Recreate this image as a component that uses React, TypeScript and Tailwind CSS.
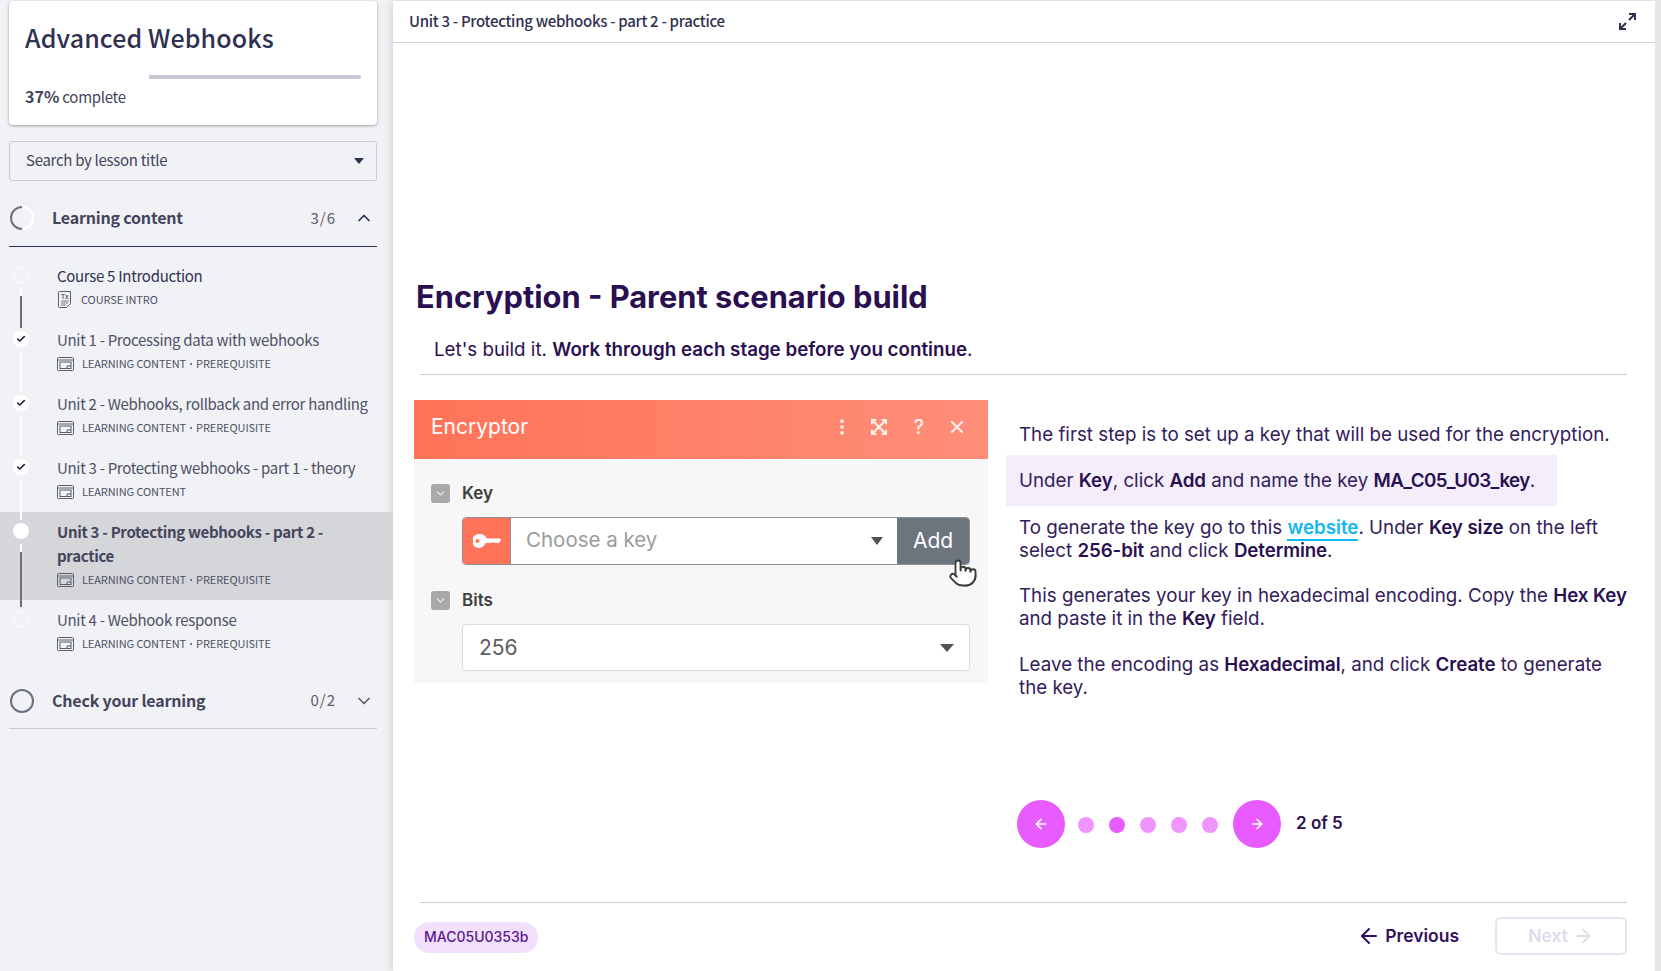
import { ArrowLeft, ArrowRight, Check, ChevronDown, ChevronUp, MoreVertical, Pointer, X } from "lucide-react";

const lessons = [
  { title: "Course 5 Introduction", meta: ["COURSE INTRO"], state: "todo", doc: true, line: "active" },
  { title: "Unit 1 - Processing data with webhooks", meta: ["LEARNING CONTENT", "PREREQUISITE"], state: "done", line: "plain" },
  { title: "Unit 2 - Webhooks, rollback and error handling", meta: ["LEARNING CONTENT", "PREREQUISITE"], state: "done", line: "plain" },
  { title: "Unit 3 - Protecting webhooks - part 1 - theory", meta: ["LEARNING CONTENT"], state: "done", line: "plain" },
  { title: "Unit 3 - Protecting webhooks - part 2 -\npractice", meta: ["LEARNING CONTENT", "PREREQUISITE"], state: "current", line: "current" },
  { title: "Unit 4 - Webhook response", meta: ["LEARNING CONTENT", "PREREQUISITE"], state: "todo", line: "none" },
];

function LessonIcon() {
  return (
    <svg width="17" height="14" viewBox="0 0 17 14" fill="none" stroke="#5b5c70" strokeWidth="1" className="shrink-0">
      <rect x="0.5" y="0.5" width="16" height="13" rx="1" />
      <path d="M0.5 3h16" />
      <rect x="3" y="5" width="11" height="6.5" />
      <path d="M10 11.5V9h4" />
    </svg>
  );
}

function DocIcon() {
  return (
    <svg width="14" height="17" viewBox="0 0 14 17" fill="none" stroke="#5b5c70" strokeWidth="1" className="ml-[1px] mr-[1px] shrink-0">
      <path d="M1.5 0.5h11v12l-4 4h-7a1 1 0 0 1-1-1v-14a1 1 0 0 1 1-1z" />
      <path d="M3 10h8M3 12h7M3 14h5" strokeWidth="0.8" />
      <text x="3" y="7.5" fontSize="6.5" fontWeight="700" fill="#5b5c70" stroke="none" fontFamily="Liberation Sans, sans-serif">Tx</text>
    </svg>
  );
}

function LessonRow({ lesson }: { lesson: (typeof lessons)[number] }) {
  const current = lesson.state === "current";
  return (
    <div className={`relative flex ${current ? "h-[88px] bg-[#d5d6da]" : "h-16"}`}>
      {lesson.line === "plain" && <div className="absolute left-[20px] top-[32px] z-10 h-[40px] w-[2px] bg-white" />}
      {lesson.line === "active" && (
        <div className="absolute left-[20px] top-[32px] z-10 h-[40px] w-[2px] bg-white">
          <div className="mt-[8px] h-[32px] w-[2px] bg-[#6d6e82]" />
        </div>
      )}
      {lesson.line === "current" && (
        <div className="absolute left-[20px] top-[32px] z-10 h-[63px] w-[2px] bg-white">
          <div className="mt-[8px] h-[55px] w-[2px] bg-[#6d6e82]" />
        </div>
      )}
      <div className="ml-[13px] mt-[11px] h-4 w-4 shrink-0">
        {lesson.state === "todo" ? (
          <div className="h-4 w-4 rounded-full border border-white" />
        ) : (
          <div className="flex h-4 w-4 items-center justify-center rounded-full bg-white">
            {lesson.state === "done" && <Check size={10} strokeWidth={3.5} className="text-[#14142b]" />}
          </div>
        )}
      </div>
      <div className="ml-[28px] pt-[8px]">
        <p className={`w-[320px] whitespace-pre-line text-[15px] leading-6 tracking-[-0.3px] ${current ? "font-semibold text-[#44455c]" : lesson.doc ? "text-[#2f3150]" : "text-[#4f5066]"}`}>
          {lesson.title}
        </p>
        <div className="flex h-[23px] items-center gap-2">
          {lesson.doc ? <DocIcon /> : <LessonIcon />}
          <div className="flex items-center gap-[4px] text-[11px] tracking-[-0.1px] text-[#4f5066]">
            <span>{lesson.meta[0]}</span>
            {lesson.meta[1] && <div className="h-[2px] w-[2px] rounded-full bg-[#4f5066]" />}
            {lesson.meta[1] && <span>{lesson.meta[1]}</span>}
          </div>
        </div>
      </div>
    </div>
  );
}

function Sidebar() {
  return (
    <aside className="flex w-[393px] shrink-0 flex-col font-['Noto_Sans_CJK_SC',sans-serif]">
      <div className="ml-[9px] mt-[1px] h-[124px] w-[368px] rounded bg-white px-4 pt-[18px] shadow-[0_1px_3px_rgba(0,0,0,0.35)]">
        <h1 className="text-[25px] font-medium leading-[36px] tracking-[0.1px] text-[#2f3150]">Advanced Webhooks</h1>
        <div className="mt-[20px] ml-[124px] h-1 w-[212px] rounded-r-sm bg-[#c8c9d5]" />
        <p className="mt-[5px] text-[15px] leading-6 tracking-[-0.3px] text-[#44455c]">
          <span className="text-base font-semibold tracking-normal">37%</span> complete
        </p>
      </div>
      <div className="ml-[9px] mt-4 flex h-10 w-[368px] items-center justify-between rounded-[3px] border border-[#c8c9d5] pb-[2px] pl-[16px] pr-[12px]">
        <span className="text-[15px] tracking-[-0.3px] text-[#44455c]">Search by lesson title</span>
        <div className="mt-[2px] h-0 w-0 border-x-[5px] border-t-[6px] border-x-transparent border-t-[#2f3150]" />
      </div>
      <div className="ml-[9px] mt-[17px] flex h-[49px] w-[368px] items-center border-b border-[#2f3150] pb-[8px]">
        <svg width="26" height="26" viewBox="0 0 26 26" className="shrink-0" fill="none">
          <circle cx="13" cy="13" r="11" stroke="#fff" strokeWidth="2" />
          <path d="M13 2a11 11 0 0 0 0 22" stroke="#6d6e82" strokeWidth="2" />
        </svg>
        <span className="ml-[17px] -mt-[2px] flex-1 text-base font-semibold tracking-[-0.2px] text-[#44455c]">Learning content</span>
        <span className="mr-[18px] text-[15px] tracking-[1px] text-[#5b5c70]">3/6</span>
        <ChevronUp size={20} className="mr-[3px] text-[#2f3150]" />
      </div>
      <div className="mt-[9px]">
        {lessons.map((lesson, i) => (
          <LessonRow key={i} lesson={lesson} />
        ))}
      </div>
      <div className="ml-[9px] mt-[11px] flex h-[54px] w-[368px] items-center border-b border-[#c8c9d5] pb-[2px]">
        <div className="ml-[1px] h-6 w-6 shrink-0 rounded-full border-2 border-[#6d6e82]" />
        <span className="ml-[18px] -mt-[2px] flex-1 text-base font-semibold tracking-[-0.2px] text-[#44455c]">Check your learning</span>
        <span className="mr-[18px] text-[15px] tracking-[1px] text-[#5b5c70]">0/2</span>
        <ChevronDown size={20} className="mr-[3px] text-[#5b5c70]" />
      </div>
    </aside>
  );
}

function Chevron() {
  return (
    <div className="flex h-[19px] w-[19px] items-center justify-center rounded-[3px] bg-[#a9a9a9]">
      <ChevronDown size={13} strokeWidth={2.5} className="text-[#e8e8e8]" />
    </div>
  );
}

function Encryptor() {
  return (
    <div className="w-[574px] shrink-0 font-['Inter',sans-serif]">
      <div className="flex h-[59px] items-center bg-gradient-to-r from-[#ff7358] to-[#ff8e79] pb-[6px] pl-[17px] text-white">
        <span className="flex-1 text-[21px] leading-none">Encryptor</span>
        <MoreVertical size={20} strokeWidth={2.5} className="mr-[19px] text-[#fff0ec]" />
        <svg width="16" height="16" viewBox="0 0 18 18" fill="none" stroke="#fff0ec" strokeWidth="2.4" className="mr-[26px]">
          <path d="M1 6V1h5M12 1h5v5M17 12v5h-5M6 17H1v-5M2 2l14 14M16 2L2 16" />
        </svg>
        <span className="mr-[23px] text-[20px] font-medium leading-none text-[#fff0ec]">?</span>
        <X size={20} strokeWidth={2.5} className="mr-[21px] text-[#fff0ec]" />
      </div>
      <div className="h-[224px] bg-[#f7f7f7] pl-[17px] pr-[18px] pt-[22px]">
        <div className="flex items-center gap-[12px]">
          <Chevron />
          <span className="text-[17px] font-semibold text-[#3d3d3d]">Key</span>
        </div>
        <div className="relative ml-[31px] mt-[10px] flex h-[48px] overflow-visible rounded border border-[#8c9096] bg-white">
          <div className="flex w-[47px] items-center justify-center rounded-l-[3px] bg-[#ff7358]">
            <svg width="28" height="14" viewBox="0 0 28 14">
              <path fill="#fff" d="M7 0a7 7 0 0 1 6.600 4.600H27l1 2-2 2.400h-4l-1-1-1 1-1-1-1 1h-5.400A7 7 0 1 1 7 0zM4.500 5a2 2 0 1 0 0 4 2 2 0 0 0 0-4z" />
            </svg>
          </div>
          <div className="flex flex-1 items-center justify-between border-l border-[#8c9096] pl-[15px] pr-[14px]">
            <span className="text-[20.5px] text-[#9b9b9b]">Choose a key</span>
            <div className="h-0 w-0 border-x-[6px] border-t-[8px] border-x-transparent border-t-[#4e5358]" />
          </div>
          <div className="flex w-[72px] items-center justify-center rounded-r-[3px] bg-[#6c747d] text-[21px] text-white">Add</div>
          <Pointer size={30} strokeWidth={1.5} fill="#fff" className="absolute right-[-9px] top-[40px] text-[#3c3c3c]" />
        </div>
        <div className="mt-[23px] flex items-center gap-[12px]">
          <Chevron />
          <span className="text-[17px] font-semibold text-[#3d3d3d]">Bits</span>
        </div>
        <div className="ml-[31px] mt-[11px] flex h-[47px] items-center justify-between rounded border border-[#dcdcdc] bg-white pl-[16px] pr-[15px]">
          <span className="text-[21px] text-[#5d5d5d]">256</span>
          <div className="h-0 w-0 border-x-[7px] border-t-[8px] border-x-transparent border-t-[#4e5358]" />
        </div>
      </div>
    </div>
  );
}

function Instructions() {
  const b = "font-semibold tracking-[-0.1px] text-[#2a1050]";
  return (
    <div className="ml-[18px] flex-1 pt-[23px] text-[18.75px] leading-[23px] text-[#33205a]">
      <p className="pl-[13px]">The first step is to set up a key that will be used for the encryption.</p>
      <p className="mt-[9px] flex h-[51px] w-[551px] items-center bg-[#f4eefb] pl-[13px]">
        <span>
          Under <span className={b}>Key</span>, click <span className={b}>Add</span> and name the key <span className="font-semibold tracking-[-0.6px] text-[#2a1050]">MA_C05_U03_key</span>.
        </span>
      </p>
      <p className="mt-[10px] pl-[13px]">
        To generate the key go to this <span className="border-b-2 border-[#12b8f2] font-semibold leading-[21px] text-[#12b8f2]">website</span>. Under <span className={b}>Key size</span> on the left
        <br />
        select <span className={b}>256-bit</span> and click <span className={b}>Determine</span>.
      </p>
      <p className="mt-[22px] whitespace-nowrap pl-[13px]">
        This generates your key in hexadecimal encoding. Copy the <span className={b}>Hex Key</span>
        <br />
        and paste it in the <span className={b}>Key</span> field.
      </p>
      <p className="mt-[23px] pl-[13px]">
        Leave the encoding as <span className={b}>Hexadecimal</span>, and click <span className={b}>Create</span> to generate
        <br />
        the key.
      </p>
    </div>
  );
}

function Pager() {
  return (
    <div className="ml-[603px] mt-[101px] flex h-12 items-center font-['Inter',sans-serif]">
      <div className="flex h-12 w-12 items-center justify-center rounded-full bg-[#e85cff] text-white">
        <ArrowLeft size={16} strokeWidth={2.5} />
      </div>
      <div className="ml-[13px] mr-[15px] mt-[2px] flex gap-[15px]">
        {[0, 1, 2, 3, 4].map((i) => (
          <div key={i} className={`h-4 w-4 rounded-full ${i === 1 ? "bg-[#e85cff]" : "bg-[#f094ff]"}`} />
        ))}
      </div>
      <div className="flex h-12 w-12 items-center justify-center rounded-full bg-[#e85cff] text-white">
        <ArrowRight size={16} strokeWidth={2.5} />
      </div>
      <span className="ml-[15px] text-[17px] font-semibold text-[#2a1050]">2 of 5</span>
    </div>
  );
}

export default function App() {
  return (
    <div className="flex h-[971px] w-[1661px] overflow-hidden bg-[#f1f2f5]">
      <Sidebar />
      <main className="mt-[1px] flex h-[970px] w-[1262px] flex-col bg-white shadow-[0_0_10px_rgba(0,0,0,0.18)]">
        <div className="flex h-[42px] shrink-0 items-center justify-between border-b border-[#cfcfdf] pl-[16px] pr-[19px] font-['Noto_Sans_CJK_SC',sans-serif]">
          <span className="text-[15px] font-medium tracking-[-0.3px] text-[#2f3150]">Unit 3 - Protecting webhooks - part 2 - practice</span>
          <svg width="17" height="17" viewBox="0 0 17 17" fill="none" stroke="#2f3150" strokeWidth="2">
            <path d="M10 1h6v6M16 1L10 7M7 16H1v-6M1 16l6-6" />
          </svg>
        </div>
        <div className="flex-1 pl-[21px] pr-[28px] font-['Inter',sans-serif]">
          <h2 className="ml-[2px] mt-[233px] text-[30.8px] font-bold leading-[42px] text-[#2a1050]">Encryption - Parent scenario build</h2>
          <p className="ml-[20px] mt-[18px] text-[18.75px] leading-[28px] text-[#2a1050]">
            Let's build it. <span className="font-semibold">Work through each stage before you continue</span>.
          </p>
          <div className="ml-[6px] mt-[10px] h-[1px] bg-[#d2cbd0]" />
          <div className="mt-[25px] flex">
            <Encryptor />
            <Instructions />
          </div>
          <Pager />
          <div className="ml-[6px] mt-[54px] h-[1px] bg-[#d2cbd0]" />
          <div className="mt-[14px] flex items-center justify-between">
            <span className="mt-[2px] flex h-[31px] items-center rounded-full bg-[#f1dffc] px-[10px] text-sm font-medium text-[#5b1a8b]">MAC05U0353b</span>
            <div className="flex items-center">
              <span className="flex items-center gap-[4px] text-[17.5px] font-semibold text-[#33105f]">
                <ArrowLeft size={24} strokeWidth={2} /> Previous
              </span>
              <span className="ml-[36px] flex h-[38px] w-[132px] items-center justify-center gap-[4px] rounded-md border-2 border-[#e8e3f0] text-[17.5px] font-semibold text-[#e0dbea]">
                Next <ArrowRight size={22} strokeWidth={2} />
              </span>
            </div>
          </div>
        </div>
      </main>
      <div className="w-[6px] bg-[#e6e6e6]" />
    </div>
  );
}
